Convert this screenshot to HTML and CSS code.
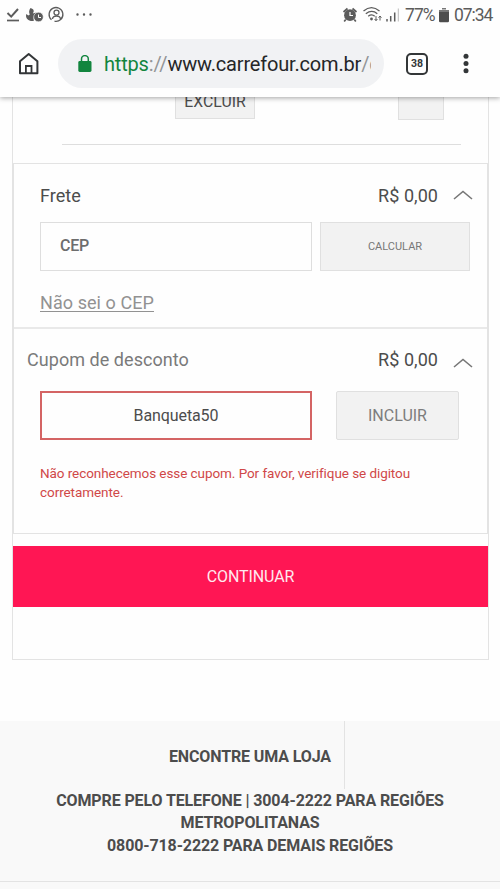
FILE: index.html
```html
<!DOCTYPE html>
<html lang="pt-BR">
<head>
<meta charset="utf-8">
<title>Carrefour</title>
<link rel="stylesheet" href="styles.css">
</head>
<body>
<header class="browser">
  <div class="status">
    <svg class="status-left" width="96" height="30" viewBox="0 0 96 30" fill="none" stroke="#5c5c5c">
      <path d="M7.500 13l3.700 3.600 6.800-7.600" stroke-width="2"/>
      <path d="M7 20.500h12" stroke-width="1.700"/>
      <path d="M30.500 8c3.500 1 4 3 2.300 5.500 2.700-1 4-1.500 3.500 1-2 0-3 2-2.500 6.500h-3c-3.500-1-5.500-3.500-4.500-7l2 1.500 1.500-1c-1-2-1-4 .7-6.500z" fill="#5c5c5c" stroke="none"/>
      <circle cx="38.500" cy="17" r="4.800" fill="#5c5c5c" stroke="#fff" stroke-width=".6"/>
      <path d="M38.500 14.500v3h2.500" stroke="#fff" stroke-width="1"/>
      <path d="M51.500 19.700a6.900 6.900 0 1 1 3 1.500" stroke-width="1.300"/>
      <circle cx="56.500" cy="12.600" r="2.500" stroke-width="1.300"/>
      <path d="M52.500 19c.5-4 7.500-4 8 0" stroke-width="1.300"/>
      <path d="M77.500 14.500h.01M84 14.500h.01M90.500 14.500h.01" stroke-width="2.400" stroke-linecap="round"/>
    </svg>
    <div class="status-right">
      <svg width="60" height="30" viewBox="340 0 60 30" fill="none" stroke="#5c5c5c">
        <circle cx="350" cy="15.200" r="5.900" fill="#5c5c5c" stroke="none"/>
        <path d="M343.500 12l4-3.500M356.500 12l-4-3.500M345.700 19.500l-1.500 2M354.300 19.500l1.500 2" stroke-width="1.700"/>
        <path d="M350 12v3.500h3" stroke="#fff" stroke-width="1.200"/>
        <path d="M363.500 11c5-4.200 11-4.200 16 0M365.800 13.700c4-3 8-3 11.500 0M368.200 16.300c2.300-1.700 4.700-1.700 6.500 0" stroke-width="1.300"/>
        <circle cx="371.500" cy="19" r="1.400" fill="#5c5c5c" stroke="none"/>
        <path d="M376 16v4.500M374.600 19l1.400 1.700 1.400-1.700M380 20.500V16M378.600 17.700l1.400-1.700 1.400 1.700" stroke-width="1"/>
        <path d="M387 21.500v-2.500M390.700 21.500v-5.500M394.700 21.500v-9" stroke-width="1.500"/>
        <path d="M398.300 21.500v-13" stroke="#bbb" stroke-width="1"/>
      </svg>
      <span class="battery-text">77%</span>
      <svg class="battery" width="10" height="15" viewBox="0 0 10 15" fill="#4d4d4d"><path d="M3 0h4v1.500H3zM0 2h10v2H0z" fill="#777"/><path d="M0 4h10v9a1.200 1.200 0 0 1-1.200 1.200H1.200A1.200 1.200 0 0 1 0 13z"/></svg>
      <span class="clock">07:34</span>
    </div>
  </div>
  <div class="toolbar">
    <svg class="home" width="22" height="24" viewBox="0 0 22 24" fill="none" stroke="#333638" stroke-width="2"><path d="M2 9.200l8.700-7.100 8.700 7.100v12H2z" stroke-linejoin="round"/><path d="M7.900 21v-7h5.600v7" stroke-width="1.800"/></svg>
    <div class="address">
      <svg width="14" height="18" viewBox="0 0 14 18"><rect x=".3" y="6" width="13.200" height="11" rx="1.400" fill="#12853e"/><path d="M3.500 7V4a3.400 3.400 0 0 1 6.800 0V7" fill="none" stroke="#12853e" stroke-width="1.500"/></svg>
      <span class="url"><span class="scheme">https</span><span class="dim">://</span>www.carrefour.com.br<span class="dim">/c</span></span>
    </div>
    <span class="tabs">38</span>
    <svg class="menu" width="6" height="22" viewBox="0 0 6 22" fill="#333638"><circle cx="3" cy="3.200" r="2.500"/><circle cx="3" cy="10.500" r="2.500"/><circle cx="3" cy="17.800" r="2.500"/></svg>
  </div>
</header>

<main class="cart">
  <div class="item-actions">
    <button class="remove">EXCLUIR</button>
    <span class="quantity"></span>
  </div>
  <hr class="rule">
  <div class="panel">
    <section class="shipping">
      <div class="heading">
        <span class="title">Frete</span><span class="price">R$ 0,00</span>
        <svg class="chevron" width="20" height="12" viewBox="0 0 20 12"><path d="M1 10l9-7.500 9 7.500"/></svg>
      </div>
      <div class="row">
        <div class="field cep">CEP</div>
        <button class="calculate">CALCULAR</button>
      </div>
      <a class="cep-link">Não sei o CEP</a>
    </section>
    <section class="coupon">
      <div class="heading">
        <span class="title">Cupom de desconto</span><span class="price">R$ 0,00</span>
        <svg class="chevron" width="20" height="12" viewBox="0 0 20 12"><path d="M1 10l9-7.500 9 7.500"/></svg>
      </div>
      <div class="row">
        <div class="field invalid">Banqueta50</div>
        <button class="include">INCLUIR</button>
      </div>
      <p class="error">Não reconhecemos esse cupom. Por favor, verifique se digitou<br>corretamente.</p>
    </section>
  </div>
  <button class="continue">CONTINUAR</button>
</main>

<footer class="footer">
  <div class="store"><span>ENCONTRE UMA LOJA</span></div>
  <p class="phones"><span class="phone-main">COMPRE PELO TELEFONE | 3004-2222 PARA REGIÕES</span><br>METROPOLITANAS<br>0800-718-2222 PARA DEMAIS REGIÕES</p>
</footer>
</body>
</html>
```
FILE: styles.css
```css
* { box-sizing: border-box; }
body { margin: 0; height: 889px; overflow: hidden; background: #fefefe; font-family: Roboto, "Liberation Sans", sans-serif; color: #4c4c4c; }
button { font: inherit; padding: 0; border: 1px solid #e0e0e0; background: #f2f2f2; border-radius: 0; }
svg { display: block; flex: none; }

.browser { height: 97px; background: #fefefe; position: relative; box-shadow: 0 1px 5px rgba(0,0,0,.36); }
.status { height: 30px; display: flex; justify-content: space-between; }
.status-right { display: flex; align-items: center; width: 160px; color: #5c5c5c; font-size: 17.500px; line-height: 30px; }
.battery-text { width: 29px; margin-left: 5px; letter-spacing: -.95px; white-space: nowrap; }
.battery { margin-left: 5px; }
.clock { margin-left: 5px; letter-spacing: -1.050px; }
.toolbar { height: 67px; padding: 0 31px 0 18px; display: flex; align-items: center; }
.address { width: 326px; height: 49px; margin-left: 18px; padding-left: 20px; border-radius: 25px; background: #f1f2f4; display: flex; align-items: center; }
.url { width: 267px; margin-left: 12px; overflow: hidden; white-space: nowrap; font-size: 20px; letter-spacing: -.180px; color: #252628; line-height: 30px; }
.scheme { color: #12853e; }
.dim { color: #939597; }
.tabs { width: 22px; height: 22px; margin-left: 22px; border: 2px solid #333638; border-radius: 5px; text-align: center; font-size: 10.500px; line-height: 18px; font-weight: 700; color: #333638; }
.menu { margin-left: 35px; }

.cart { width: 477px; height: 563px; margin: 0 auto 0 12px; border: 1px solid #e3e3e3; border-top: 0; }
.item-actions { height: 23px; display: flex; align-items: flex-start; }
.remove { width: 80px; height: 22px; margin-left: 162px; border-top: 0; color: #4c4c4c; font-size: 15.800px; line-height: 10px; padding-bottom: 14px; }
.quantity { width: 46px; height: 23px; margin-left: 143px; background: #f2f2f2; border: 1px solid #e0e0e0; border-top: 0; }
.rule { width: 399px; height: 1px; border: 0; background: #dedede; margin: 24px 0 18px 49px; }
.panel { height: 371px; border: 1px solid #e3e3e3; }
.shipping { height: 165px; border-bottom: 2px solid #e9e9e9; padding-left: 26px; }
.heading { display: flex; align-items: center; height: 58px; padding: 4px 14px 0 0; font-size: 18px; }
.title { flex: 1; letter-spacing: .05px; }
.price { letter-spacing: .05px; }
.chevron { margin-left: 15px; fill: none; stroke: #777; stroke-width: 1.600; }
.row { display: flex; height: 49px; }
.field { width: 272px; border: 1px solid #dedede; font-size: 16px; line-height: 46px; }
.cep { padding-left: 19px; color: #6d6d6d; letter-spacing: -.3px; font-weight: 500; }
.calculate { width: 150px; margin-left: 8px; font-size: 11px; color: #777; }
.cep-link { display: inline-block; margin-top: 21px; font-size: 18px; line-height: 22px; letter-spacing: .070px; color: #929292; text-decoration: underline; text-decoration-thickness: 1px; text-underline-offset: 2px; }
.coupon { padding-left: 26px; }
.coupon .heading { height: 62px; padding-top: 0; }
.coupon .title, .coupon .price { padding-bottom: 2px; }
.coupon .title { margin-left: -13px; color: #7a7a7a; }
.coupon .chevron { margin-top: 5px; }
.invalid { border: 2px solid #d46464; text-align: center; line-height: 45px; letter-spacing: -.1px; }
.include { width: 123px; margin-left: 24px; border-radius: 2px; font-size: 16px; color: #7d7d7d; }
.error { margin: 24px 0 0; font-size: 13.500px; line-height: 19px; letter-spacing: -.070px; color: #d04848; white-space: nowrap; }
.continue { display: block; width: 475px; height: 61px; margin-top: 12px; border: 0; background: #ff1654; color: #ffe9ef; font-size: 16px; letter-spacing: -.1px; }

.footer { height: 168px; margin-top: 61px; background: #f9f9f9; font-size: 16px; font-weight: 700; letter-spacing: -.120px; text-align: center; }
.store { width: 345px; height: 68px; border-right: 1px solid #e3e3e3; text-align: right; padding-right: 13px; line-height: 71px; }
.phones { height: 93px; margin: 0; padding-top: 1px; border-bottom: 1px solid #e3e3e3; line-height: 22.300px; }
```
